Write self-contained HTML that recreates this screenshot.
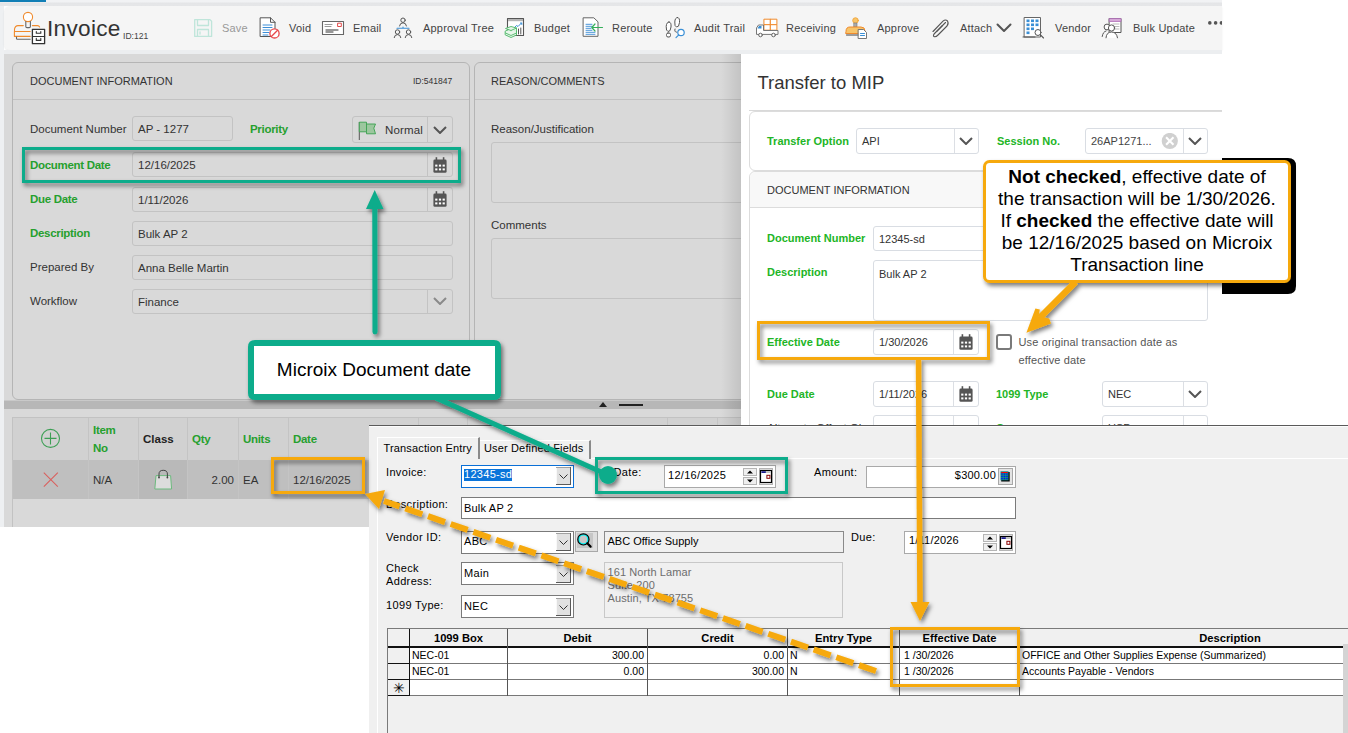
<!DOCTYPE html>
<html><head><meta charset="utf-8">
<style>
*{box-sizing:border-box;margin:0;padding:0}
html,body{width:1348px;height:733px;overflow:hidden;background:#fff;font-family:"Liberation Sans",sans-serif;color:#333}
.a{position:absolute}
.t{position:absolute;white-space:nowrap}
/* top app */
#strip{left:0;top:0;width:1222px;height:6px;background:linear-gradient(#f1f2f4 0,#f1f2f4 2px,#e4e5e7 3px,#e6e7e9 6px)}
#blue{left:0;top:0;width:46px;height:2px;background:#127fb6}
#leftstrip{left:0;top:6px;width:4px;height:521px;background:#eef0f2}
#toolbar{left:4px;top:6px;width:1218px;height:44px;background:#f5f5f5;border-radius:6px 0 0 6px;box-shadow:0 1px 2px rgba(0,0,0,.08)}
#below{left:4px;top:50px;width:1218px;height:4px;background:#eceef0}
#backdrop{left:4px;top:54px;width:737px;height:473px;background:#d9d9d9}
.tb{position:absolute;top:22px;font-size:11px;color:#444;white-space:nowrap;letter-spacing:.2px}
.panel{position:absolute;border:1px solid #b5b5b5;border-radius:6px;background:#d9d9d9}
.phead{position:absolute;left:0;top:0;right:0;height:37px;border-bottom:1px solid #c2c2c2}
.lbl{position:absolute;font-size:11.5px;color:#333;white-space:nowrap}
.glbl{position:absolute;font-size:11.5px;color:#26a02e;font-weight:bold;white-space:nowrap;letter-spacing:-.3px}
.inp{position:absolute;border:1px solid #c3c3c3;border-radius:3px;background:#d9d9d9;font-size:11.5px;color:#333;padding:0 0 0 5px;line-height:25px;white-space:nowrap}
.mg{position:absolute;font-size:11px;color:#22b526;font-weight:bold;white-space:nowrap}
.minp{position:absolute;border:1px solid #d9dde3;border-radius:3px;background:#fff;font-size:11px;color:#333;padding:0 0 0 5px;line-height:24px;white-space:nowrap}
.msep{position:absolute;top:0;bottom:0;width:1px;background:#dcdfe4}
.chev{position:absolute;top:6px;width:10px;height:10px;border-right:2px solid #444;border-bottom:2px solid #444;transform:rotate(45deg) scale(.9)}
.ddb{position:absolute;width:15px;height:18px;border:1px solid #a0a0a0;background:linear-gradient(#f2f2f2,#dedede)}
.gh{position:absolute;top:631.5px;font-size:11.2px;font-weight:bold;color:#000;text-align:center;white-space:nowrap}
.gd{position:absolute;font-size:10.5px;color:#000;white-space:nowrap}
.ml{position:absolute;font-size:11px;color:#000;white-space:nowrap;letter-spacing:.35px}
.sep{position:absolute;top:0;bottom:0;width:1px;background:#c6c6c6}
</style></head><body>

<svg width="0" height="0" style="position:absolute">
 <defs>
  <symbol id="cal" viewBox="0 0 14 16">
   <path d="M1.8 2.6 H12.2 Q13.6 2.6 13.6 4 V14.4 Q13.6 15.8 12.2 15.8 H1.8 Q0.4 15.8 0.4 14.4 V4 Q0.4 2.6 1.8 2.6 Z" fill="currentColor"/>
   <rect x="2.6" y="0.2" width="1.6" height="3" fill="currentColor"/><rect x="9.8" y="0.2" width="1.6" height="3" fill="currentColor"/>
   <rect x="1.6" y="4.4" width="10.8" height="1.4" fill="#fff" opacity="0"/>
   <g fill="#fff"><rect x="2.2" y="7.6" width="2.2" height="2"/><rect x="5.9" y="7.6" width="2.2" height="2"/><rect x="9.6" y="7.6" width="2.2" height="2"/><rect x="2.2" y="11.4" width="2.2" height="2"/><rect x="5.9" y="11.4" width="2.2" height="2"/><rect x="9.6" y="11.4" width="2.2" height="2"/></g>
  </symbol>
  <symbol id="chev" viewBox="0 0 14 8"><path d="M1 1 L7 7 L13 1" fill="none" stroke="currentColor" stroke-width="2"/></symbol>
 </defs>
</svg>
<div id="strip" class="a"></div>
<div id="blue" class="a"></div>
<div id="leftstrip" class="a"></div>
<div id="toolbar" class="a"></div>
<div id="below" class="a"></div>
<div id="backdrop" class="a"></div>


<!-- toolbar icons -->
<svg class="a" style="left:0;top:0" width="1222" height="50" viewBox="0 0 1222 50" fill="none" stroke-linecap="round" stroke-linejoin="round">
 <!-- logo -->
 <g transform="translate(10,8)">
  <circle cx="18" cy="9" r="4.6" stroke="#f08a2c" stroke-width="1.1" fill="#fff"/>
  <path d="M15.8 13.6 V18.4 Q15.8 19.6 17 19.6 H19.2 Q20.4 19.6 20.4 18.4 V13.6" stroke="#666" stroke-width="1.1"/>
  <path d="M13.3 17.6 H8 Q5.2 17.6 4.5 21 V23.5" stroke="#f08a2c" stroke-width="1.1"/>
  <path d="M22.4 17.6 H27.5 Q29 17.6 29.6 19" stroke="#f08a2c" stroke-width="1.1"/>
  <path d="M20.2 23.5 H4.4 V28.4 H20.2" stroke="#f08a2c" stroke-width="1.1"/>
  <path d="M6.5 29 V30.6 Q6.5 31.3 7.3 31.3 H20.2" stroke="#666" stroke-width="1.1"/>
  <rect x="22.4" y="21.3" width="12.2" height="14.4" fill="#fff" stroke="#333" stroke-width="1.3"/>
  <line x1="22.4" y1="28.5" x2="34.6" y2="28.5" stroke="#333" stroke-width="1.2"/>
  <path d="M26.3 23.5 V25.3 H30.8 V23.5 M26.3 30.4 V32.4 H30.8 V30.4" stroke="#333" stroke-width="1.1"/>
 </g>
 <!-- save -->
 <g stroke="#bfe5da" stroke-width="1.3" fill="none">
  <path d="M194.7 19.6 H210 L211.6 21.2 V36.4 H194.7 Z"/>
  <path d="M197.5 19.6 V25.5 H208.5 V19.6"/>
  <path d="M197.5 36.4 V29.5 H208.5 V36.4"/>
  <line x1="200" y1="32" x2="200" y2="34"/>
 </g>
 <!-- void -->
 <path d="M260.5 17.8 H270.5 L275 22.3 V36.5 H260.5 Z" fill="#fff" stroke="#555" stroke-width="1"/>
 <path d="M270.5 17.8 V22.3 H275" stroke="#555" stroke-width="1"/>
 <g stroke="#3c8fd8" stroke-width="1"><line x1="263" y1="25" x2="272" y2="25"/><line x1="263" y1="27.5" x2="272" y2="27.5"/><line x1="263" y1="30" x2="270" y2="30"/><line x1="263" y1="32.5" x2="269" y2="32.5"/><line x1="263" y1="35" x2="268" y2="35"/></g>
 <circle cx="274.5" cy="33.4" r="4.6" fill="#fff" stroke="#e8464a" stroke-width="1.3"/>
 <line x1="271.4" y1="36.5" x2="277.6" y2="30.3" stroke="#e8464a" stroke-width="1.3"/>
 <!-- email -->
 <rect x="322.5" y="21.5" width="21" height="13" fill="#fff" stroke="#666" stroke-width="1.1"/>
 <g stroke="#999" stroke-width="1"><line x1="325" y1="24.5" x2="332" y2="24.5"/><line x1="325" y1="26.5" x2="331" y2="26.5"/></g>
 <g stroke="#777" stroke-width="1.3"><line x1="326" y1="30" x2="338" y2="30"/><line x1="326" y1="32" x2="333" y2="32"/></g>
 <rect x="338" y="23.2" width="3.3" height="3.3" fill="#fff" stroke="#e24a4a" stroke-width="1"/>
 <!-- approval tree -->
 <g stroke="#555" stroke-width="1">
  <circle cx="403" cy="20.2" r="2.2"/><path d="M399.5 26 Q400 22.8 403 22.8 Q406 22.8 406.5 26"/>
  <circle cx="397.5" cy="32" r="2.2"/><path d="M394.2 37.6 Q394.5 34.6 397.5 34.6 Q400.5 34.6 400.8 37.6"/>
  <circle cx="408.5" cy="32" r="2.2"/><path d="M405.2 37.6 Q405.5 34.6 408.5 34.6 Q411.5 34.6 411.8 37.6"/>
 </g>
 <path d="M397 28.3 H409 M403 27 V28.3" stroke="#3a8fd6" stroke-width="1.1"/>
 <!-- budget -->
 <rect x="507.5" y="18.5" width="16" height="17" fill="#fff" stroke="#555" stroke-width="1.1"/>
 <rect x="508" y="19" width="15" height="2.2" fill="#b5b5b5"/>
 <path d="M513.5 28.5 L516.5 25.5 L518 26.5 L521.5 23" stroke="#3a8fd6" stroke-width="1"/>
 <path d="M520.5 23 H521.8 V24.5" stroke="#3a8fd6" stroke-width="1"/>
 <path d="M518.5 29 V34 M520.8 28 V34" stroke="#555" stroke-width="1"/>
 <g stroke="#4cb866" stroke-width=".9" fill="#e8f6ea">
  <path d="M505.5 31 L511 28.5 L516.5 31 V35 L511 37.5 L505.5 35 Z"/>
  <path d="M505.5 33 L511 35.5 L516.5 33"/>
  <path d="M511 30.5 L516.5 28 V31 M511 30.5 L505.5 28.5 L511 26.5 L516.5 28"/>
 </g>
 <!-- reroute -->
 <path d="M583.5 17.8 H593.8 L598 21.8 V36.3 H583.5 Z" fill="#fff" stroke="#666" stroke-width="1"/>
 <g stroke="#4a94d8" stroke-width="1"><line x1="586" y1="24.3" x2="592" y2="24.3"/><line x1="586" y1="26.3" x2="592" y2="26.3"/><line x1="586" y1="28.3" x2="591" y2="28.3"/><line x1="586" y1="30.3" x2="592" y2="30.3"/><line x1="586" y1="32.3" x2="595" y2="32.3"/><line x1="586" y1="34.3" x2="595" y2="34.3"/></g>
 <path d="M602.5 27.5 H592 M595 24 L591.8 27.5 L595 31" stroke="#35b05a" stroke-width="1.2"/>
 <!-- audit trail -->
 <g stroke="#555" stroke-width="1" fill="#fff">
  <path d="M669 22 Q666.5 22 666.2 26.5 Q666 31 668 31.5 Q670.5 32 671 27 Q671.5 22 669 22 Z"/>
  <rect x="666.5" y="33" width="4" height="4" rx="1.5"/>
  <path d="M677.5 17.5 Q675 17.5 674.8 22 Q674.5 26.5 676.5 27 Q679 27.5 679.5 22.5 Q680 17.5 677.5 17.5 Z"/>
  <path d="M675 29 Q674 32 676.5 32.2"/>
 </g>
 <circle cx="681" cy="32.5" r="3.2" stroke="#3a8fd6" stroke-width="1.2" fill="#fff"/>
 <line x1="678.8" y1="34.8" x2="676" y2="37.6" stroke="#3a8fd6" stroke-width="1.2"/>
 <!-- receiving -->
 <g stroke="#f08a2c" stroke-width="1" fill="#fff"><rect x="764.3" y="19.2" width="6.3" height="5.5"/><rect x="770.6" y="19.2" width="6.3" height="5.5"/><rect x="764.3" y="24.7" width="6.3" height="5.5"/><rect x="770.6" y="24.7" width="6.3" height="5.5"/></g>
 <path d="M756.5 34 V28 L758.5 25 H763.5 V30.5 H778 V34 Z" fill="#fff" stroke="#777" stroke-width="1"/>
 <path d="M757.5 28.5 L759 26 H761.5 V28.5 Z" fill="#3a8fd6"/>
 <circle cx="760.5" cy="35" r="1.8" fill="#fff" stroke="#666" stroke-width="1"/><circle cx="773.5" cy="35" r="1.8" fill="#fff" stroke="#666" stroke-width="1"/>
 <!-- approve -->
 <circle cx="855.5" cy="20.5" r="2.8" fill="#f7c46a" stroke="#f0a030" stroke-width=".8"/>
 <rect x="854" y="23" width="3" height="4" fill="#aaa" stroke="#777" stroke-width=".6"/>
 <path d="M846 31 Q846 27 850 27 H861 Q865 27 865 31 V33.5 H846 Z" fill="#f7c46a" stroke="#f08a2c" stroke-width="1"/>
 <line x1="846.5" y1="35" x2="860" y2="35" stroke="#444" stroke-width="1"/>
 <path d="M858.5 29.5 H863.5 L866.5 32.5 V38.5 H858.5 Z" fill="#fff" stroke="#777" stroke-width="1"/>
 <path d="M860.5 33.5 H864.5 M860.5 35.5 H864.5" stroke="#3a8fd6" stroke-width="1"/>
 <!-- attach -->
 <path d="M945.5 22.5 L935 33 Q932.5 35.5 934 36.5 Q935.5 37.5 938 35 L947 26 Q949 23.5 947.5 21 Q945.5 19 943 21.2 L933 31.5" stroke="#555" stroke-width="1.1"/>
 <path d="M942.5 25.5 L936.8 31.3" stroke="#555" stroke-width="1.1"/>
 <path d="M997.5 24.5 L1004 31 L1010.5 24.5" stroke="#555" stroke-width="2"/>
 <!-- vendor -->
 <rect x="1024.5" y="17.5" width="16" height="19.5" fill="#fff" stroke="#666" stroke-width="1"/>
 <g fill="#3a8fd6"><rect x="1026.5" y="19.5" width="3" height="2.6"/><rect x="1031" y="19.5" width="3" height="2.6"/><rect x="1035.5" y="19.5" width="3" height="2.6"/><rect x="1026.5" y="23.5" width="3" height="2.6"/><rect x="1031" y="23.5" width="3" height="2.6"/><rect x="1035.5" y="23.5" width="3" height="2.6"/><rect x="1026.5" y="27.5" width="3" height="2.6"/><rect x="1031" y="27.5" width="3" height="2.6"/><rect x="1026.5" y="31.5" width="3" height="2.6"/></g>
 <circle cx="1038" cy="32.5" r="3" fill="#fff" stroke="#555" stroke-width="1"/>
 <line x1="1040.2" y1="34.7" x2="1043.5" y2="38" stroke="#555" stroke-width="1.1"/>
 <line x1="1023" y1="37" x2="1035" y2="37" stroke="#555" stroke-width="1"/>
 <!-- bulk update -->
 <rect x="1109.5" y="18.5" width="11.5" height="14" fill="#fff" stroke="#555" stroke-width="1"/>
 <rect x="1109.5" y="18.5" width="11.5" height="3" fill="#d6a8d8" stroke="#b070b8" stroke-width=".8"/>
 <g stroke="#bbb" stroke-width="1"><line x1="1113" y1="24" x2="1119" y2="24"/><line x1="1113" y1="26.5" x2="1119" y2="26.5"/><line x1="1113" y1="29" x2="1119" y2="29"/></g>
 <circle cx="1107" cy="27" r="2.9" fill="#fff" stroke="#555" stroke-width="1"/>
 <path d="M1102.2 36.5 Q1103 31.5 1106 31" stroke="#555" stroke-width="1"/>
 <circle cx="1111.5" cy="28" r="3.1" fill="#fff" stroke="#555" stroke-width="1"/>
 <path d="M1106 37.8 Q1106.5 32 1111.5 32 Q1116.5 32 1117.5 37.8" fill="#fff" stroke="#555" stroke-width="1"/>
 <!-- dots -->
 <g fill="#555"><circle cx="1209.8" cy="22.9" r="1.8"/><circle cx="1215.6" cy="22.9" r="1.8"/><circle cx="1221.4" cy="22.9" r="1.8"/></g>
</svg>
<!-- toolbar content -->
<div class="t" style="left:47px;top:16px;font-size:22.6px;color:#333;line-height:26px;letter-spacing:.3px">Invoice</div>
<div class="t" style="left:123px;top:30.5px;font-size:8.6px;color:#444">ID:121</div>
<div class="tb" style="left:222px;color:#999">Save</div>
<div class="tb" style="left:289px">Void</div>
<div class="tb" style="left:353px">Email</div>
<div class="tb" style="left:423px">Approval Tree</div>
<div class="tb" style="left:534px">Budget</div>
<div class="tb" style="left:612px">Reroute</div>
<div class="tb" style="left:694px">Audit Trail</div>
<div class="tb" style="left:786px">Receiving</div>
<div class="tb" style="left:877px">Approve</div>
<div class="tb" style="left:960px">Attach</div>
<div class="tb" style="left:1055px">Vendor</div>
<div class="tb" style="left:1133px">Bulk Update</div>

<!-- document information panel -->
<div class="panel" style="left:12px;top:62px;width:458px;height:338px">
  <div class="phead"></div>
</div>
<div class="t" style="left:30px;top:74.5px;font-size:11px;color:#333">DOCUMENT INFORMATION</div>
<div class="t" style="left:413px;top:76px;font-size:8.5px;color:#333">ID:541847</div>
<div class="lbl" style="left:30px;top:123px">Document Number</div>
<div class="inp" style="left:132px;top:116px;width:101px;height:25px">AP - 1277</div>
<div class="glbl" style="left:250px;top:123px">Priority</div>
<div class="lbl" style="left:30px;top:159px;color:#26a02e;font-weight:bold;letter-spacing:-.3px">Document Date</div>
<div class="inp" style="left:132px;top:152px;width:321px;height:25px">12/16/2025</div>
<div class="glbl" style="left:30px;top:193px">Due Date</div>
<div class="inp" style="left:132px;top:186.5px;width:321px;height:25px;line-height:24.5px">1/11/2026</div>
<div class="glbl" style="left:30px;top:227px">Description</div>
<div class="inp" style="left:132px;top:220.5px;width:321px;height:25px;line-height:24.5px">Bulk AP 2</div>
<div class="lbl" style="left:30px;top:261px">Prepared By</div>
<div class="inp" style="left:132px;top:254.5px;width:321px;height:25px;line-height:24.5px">Anna Belle Martin</div>
<div class="lbl" style="left:30px;top:295px">Workflow</div>
<div class="inp" style="left:132px;top:288.5px;width:321px;height:25px;line-height:24.5px">Finance</div>


<div class="inp" style="left:352px;top:116px;width:101px;height:27px;line-height:25px"></div>
<div class="a" style="left:427px;top:117px;width:1px;height:25px;background:#c3c3c3"></div>
<svg class="a" style="left:358px;top:121px" width="19" height="20" viewBox="0 0 19 20"><path d="M1.3 1 V19" stroke="#555" stroke-width="1"/><path d="M1.3 1.2 H8.5 V3 H17.5 L15.8 7.2 L17.5 12.8 H8.5 V10.8 H1.3 Z" fill="#9cc79e" stroke="#3aa04e" stroke-width="0.9"/><path d="M8.5 3 V10.8" stroke="#3aa04e" stroke-width="0.9"/></svg>
<div class="t" style="left:385px;top:124px;font-size:11.5px;color:#333;letter-spacing:.15px">Normal</div>
<svg class="a" style="left:433px;top:126px;color:#555" width="14" height="8"><use href="#chev"/></svg>
<div class="a" style="left:427px;top:153px;width:1px;height:24px;background:#c3c3c3"></div>
<svg class="a" style="left:433px;top:157px;color:#555" width="14" height="16"><use href="#cal"/></svg>
<div class="a" style="left:427px;top:188px;width:1px;height:23px;background:#c3c3c3"></div>
<svg class="a" style="left:433px;top:191px;color:#555" width="14" height="16"><use href="#cal"/></svg>
<div class="a" style="left:427px;top:290px;width:1px;height:23px;background:#c3c3c3"></div>
<svg class="a" style="left:433px;top:297px;color:#8a8a8a" width="14" height="8"><use href="#chev"/></svg>

<!-- reason panel -->
<div class="panel" style="left:474px;top:62px;width:300px;height:338px">
  <div class="phead"></div>
</div>


<!-- reason panel content -->
<div class="t" style="left:491px;top:74.5px;font-size:11px;color:#333">REASON/COMMENTS</div>
<div class="lbl" style="left:491px;top:123px">Reason/Justification</div>
<div class="inp" style="left:491px;top:142px;width:280px;height:61px"></div>
<div class="lbl" style="left:491px;top:219px">Comments</div>
<div class="inp" style="left:491px;top:238px;width:280px;height:61px"></div>

<!-- splitter -->
<div class="a" style="left:4px;top:400px;width:737px;height:1px;background:#c9c9c9"></div>
<div class="a" style="left:4px;top:401px;width:737px;height:8px;background:#b7b7b7"></div>
<div class="a" style="left:599px;top:402px;width:0;height:0;border-left:4px solid transparent;border-right:4px solid transparent;border-bottom:5px solid #222"></div>
<div class="a" style="left:619px;top:404px;width:24px;height:2px;background:#222"></div>

<!-- lines grid -->
<div class="a" style="left:12px;top:417px;width:729px;height:110px;border-left:1px solid #c2c2c2;border-top:1px solid #c2c2c2;background:#d9d9d9"></div>
<div class="a" style="left:13px;top:418px;width:728px;height:42px;background:#d1d1d1"></div>
<div class="a" style="left:13px;top:460px;width:728px;height:39px;background:#bfbfbf"></div>
<div class="a" style="left:88px;top:418px;width:1px;height:81px;background:#c4c4c4"></div>
<div class="a" style="left:138px;top:418px;width:1px;height:81px;background:#c4c4c4"></div>
<div class="a" style="left:187px;top:418px;width:1px;height:81px;background:#c4c4c4"></div>
<div class="a" style="left:238px;top:418px;width:1px;height:81px;background:#c4c4c4"></div>
<div class="a" style="left:288px;top:418px;width:1px;height:81px;background:#c4c4c4"></div>
<div class="a" style="left:418px;top:418px;width:1px;height:81px;background:#c4c4c4"></div>
<div class="a" style="left:467px;top:418px;width:1px;height:81px;background:#c4c4c4"></div>
<div class="a" style="left:667px;top:418px;width:1px;height:81px;background:#c4c4c4"></div>
<div class="a" style="left:717px;top:418px;width:1px;height:81px;background:#c4c4c4"></div>
<div class="a" style="left:139px;top:460px;width:48px;height:39px;background:#b9b9b9"></div>
<svg class="a" style="left:0;top:410px" width="200" height="90" viewBox="0 410 200 90">
 <circle cx="50.5" cy="438.4" r="9" fill="none" stroke="#3d9f55" stroke-width="1.1"/>
 <path d="M44.5 438.4 H56.5 M50.5 432.4 V444.4" stroke="#3d9f55" stroke-width="1.1"/>
 <path d="M43.8 472.6 L57.8 486.6 M57.8 472.6 L43.8 486.6" stroke="#d9605e" stroke-width="1.1"/>
 <path d="M156 475.6 H170.6 L171.6 489 H154.8 Z" fill="#dcdcdc" stroke="#6dba7e" stroke-width="1"/>
 <path d="M159 477.5 V474 Q159 470.3 163.2 470.3 Q167.4 470.3 167.4 474 V477.5" fill="none" stroke="#444" stroke-width="1"/>
 <circle cx="159" cy="477.5" r="0.9" fill="#444"/><circle cx="167.4" cy="477.5" r="0.9" fill="#444"/>
</svg>
<div class="glbl" style="left:93px;top:422.3px;line-height:17.4px">Item<br>No</div>
<div class="lbl" style="left:143px;top:433px;font-weight:bold;color:#222">Class</div>
<div class="glbl" style="left:192px;top:433px">Qty</div>
<div class="glbl" style="left:243px;top:433px">Units</div>
<div class="glbl" style="left:293px;top:433px">Date</div>
<div class="lbl" style="left:93px;top:474px">N/A</div>
<div class="lbl" style="left:199px;top:474px;width:35px;text-align:right">2.00</div>
<div class="lbl" style="left:243px;top:474px">EA</div>
<div class="lbl" style="left:293px;top:474px">12/16/2025</div>

<!-- transfer modal -->
<div class="a" style="left:721px;top:54px;width:20px;height:373px;background:linear-gradient(to right,rgba(0,0,0,0),rgba(0,0,0,.10))"></div>
<div class="a" id="modal" style="left:741px;top:54px;width:481px;height:371px;background:#fff;overflow:hidden">
 <div class="t" style="left:16.5px;top:18px;font-size:18.5px;color:#333">Transfer to MIP</div>
 <div class="a" style="left:8px;top:56px;width:480px;height:1px;background:#d9d9d9"></div>
 <div class="a" style="left:8px;top:57px;width:490px;height:60px;border:1px solid #dcdcdc;border-radius:6px;background:#fff"></div>
 <div class="mg" style="left:26px;top:81px">Transfer Option</div>
 <div class="minp" style="left:115px;top:74px;width:123px;height:26px">API<div class="msep" style="left:97px"></div></div>
 <svg class="a" style="left:218px;top:83px;color:#555" width="14" height="8"><use href="#chev"/></svg>
 <div class="mg" style="left:256px;top:81px">Session No.</div>
 <div class="minp" style="left:344px;top:74px;width:123px;height:26px;color:#444">26AP1271...<div class="msep" style="left:97px"></div></div>
 <svg class="a" style="left:420px;top:78.8px" width="18" height="18" viewBox="0 0 18 18"><circle cx="8.8" cy="8" r="8.1" fill="#d0d0d0"/><path d="M5.1 4.3 L12.5 11.7 M12.5 4.3 L5.1 11.7" stroke="#fff" stroke-width="2.1"/></svg>
 <svg class="a" style="left:447px;top:83px;color:#555" width="14" height="8"><use href="#chev"/></svg>
 <div class="a" style="left:8px;top:117px;width:490px;height:300px;border:1px solid #dcdcdc;border-radius:6px;background:#fff"></div>
 <div class="a" style="left:9px;top:118px;width:480px;height:36px;background:#f8f8f8;border-bottom:1px solid #dcdcdc;border-radius:6px 0 0 0"></div>
 <div class="t" style="left:26px;top:129.5px;font-size:11px;color:#333">DOCUMENT INFORMATION</div>
 <div class="mg" style="left:26px;top:178px">Document Number</div>
 <div class="minp" style="left:132px;top:171.5px;width:335px;height:25px">12345-sd</div>
 <div class="mg" style="left:26px;top:212px">Description</div>
 <div class="minp" style="left:132px;top:205.5px;width:335px;height:61px;line-height:14px;padding-top:6px">Bulk AP 2</div>
 <div class="mg" style="left:26px;top:282px">Effective Date</div>
 <div class="minp" style="left:132px;top:275px;width:106px;height:25.5px">1/30/2026<div class="msep" style="left:79px"></div></div>
 <svg class="a" style="left:218px;top:280px;color:#555" width="14" height="16"><use href="#cal"/></svg>
 <div class="a" style="left:255px;top:280px;width:15.5px;height:15.5px;border:2px solid #7a7a7a;border-radius:3px;background:#fff"></div>
 <div class="t" style="left:277.5px;top:280px;font-size:11px;color:#555;line-height:17.5px;letter-spacing:.15px">Use original transaction date as<br>effective date</div>
 <div class="mg" style="left:26px;top:334px">Due Date</div>
 <div class="minp" style="left:132px;top:327px;width:106px;height:25.5px">1/11/2026<div class="msep" style="left:79px"></div></div>
 <svg class="a" style="left:218px;top:332px;color:#555" width="14" height="16"><use href="#cal"/></svg>
 <div class="mg" style="left:255px;top:334px">1099 Type</div>
 <div class="minp" style="left:361px;top:327px;width:106px;height:25.5px">NEC<div class="msep" style="left:80px"></div></div>
 <svg class="a" style="left:447px;top:336px;color:#555" width="14" height="8"><use href="#chev"/></svg>
 <div class="t" style="left:26px;top:368px;font-size:11.5px;color:#333">Alternate Offset Gl</div>
 <div class="minp" style="left:132px;top:361px;width:106px;height:25px"><div class="msep" style="left:79px"></div></div>
 <div class="mg" style="left:255px;top:368px">Currency</div>
 <div class="minp" style="left:361px;top:361px;width:106px;height:25px">USD<div class="msep" style="left:80px"></div></div>
</div>

<!-- microix window -->
<svg width="0" height="0" style="position:absolute">
 <defs>
  <symbol id="ddb" viewBox="0 0 15 18">
   <rect x="0" y="0" width="15" height="18" fill="#e1e1e1"/>
   <path d="M0.5 17.5 V0.5 H14.5" fill="none" stroke="#f8f8f8" stroke-width="1"/>
   <path d="M0 0.5 H14.5 V17.5 H0" fill="none" stroke="#a0a0a0" stroke-width="1"/>
   <path d="M14.5 0 V18 M0 17.5 H15" fill="none" stroke="#5a5a5a" stroke-width="1"/>
   <path d="M3.5 7.5 L7.5 11.5 L11.5 7.5" fill="none" stroke="#333" stroke-width="1"/>
  </symbol>
  <symbol id="spin" viewBox="0 0 14 17">
   <rect x="0.5" y="0.5" width="13" height="7" fill="#efefef" stroke="#b5b5b5"/>
   <rect x="0.5" y="9.5" width="13" height="7" fill="#efefef" stroke="#b5b5b5"/>
   <path d="M4 5.5 L7 2.5 L10 5.5 Z M4 11.5 L7 14.5 L10 11.5 Z" fill="#000"/>
  </symbol>
  <symbol id="calb" viewBox="0 0 14 17">
   <rect x="0.5" y="0.5" width="13" height="16" fill="#efefef" stroke="#b5b5b5"/>
   <rect x="1.5" y="2.5" width="11" height="12" fill="#fff" stroke="#000" stroke-width="1.2"/>
   <rect x="2.4" y="3.3" width="4.5" height="1.6" fill="#000080"/>
   <rect x="6.9" y="3.3" width="4.6" height="1.6" fill="#b8b8b8"/>
   <rect x="7.9" y="7.3" width="3" height="3" fill="none" stroke="#8b0000" stroke-width="1"/>
  </symbol>
 </defs>
</svg>
<div class="a" id="mx" style="left:369px;top:425px;width:979px;height:308px;background:#f0f0f0;overflow:hidden;font-size:11px;color:#000">
 <div class="a" style="left:0;top:0;width:979px;height:1px;background:#5a5a5a"></div>
 <div class="a" style="left:0;top:1px;width:979px;height:1px;background:#fcfcfc"></div>
 <!-- tab panel -->
 <div class="a" style="left:8px;top:33px;width:980px;height:290px;border-left:1px solid #fff;border-top:1px solid #fff"></div>
 <div class="a" style="left:110px;top:14.5px;width:112px;height:19px;border-top:1px solid #fff;border-left:1px solid #fff;border-right:2px solid #8a8a8a;background:#f0f0f0"></div>
 <div class="a" style="left:8px;top:12px;width:103px;height:22px;border-left:1px solid #fff;border-top:1px solid #fff;border-right:2px solid #8a8a8a;background:#f0f0f0"></div>
 <div class="ml" style="left:14.5px;top:17px;letter-spacing:.15px">Transaction Entry</div>
 <div class="ml" style="left:115px;top:17px;letter-spacing:.15px">User Defined Fields</div>
 <!-- invoice -->
 <div class="ml" style="left:17px;top:41px">Invoice:</div>
 <div class="a" style="left:92px;top:40px;width:113px;height:23px;border:1px solid #0a6fd6;background:#fff"></div>
 <div class="a" style="left:94.8px;top:43.6px;width:48px;height:12px;background:#0a74da"></div>
 <div class="ml" style="left:95px;top:43px;color:#fff;letter-spacing:.3px">12345-sd</div>
 <svg class="a" style="left:187px;top:42px" width="15" height="18"><use href="#ddb"/></svg>
 <!-- date -->
 <div class="ml" style="left:244.5px;top:41px">Date:</div>
 <div class="a" style="left:295px;top:40.3px;width:112px;height:23px;border:1px solid #a9a9a9;background:#fff"></div>
 <div class="ml" style="left:299px;top:44px;letter-spacing:.3px">12/16/2025</div>
 <svg class="a" style="left:374px;top:43px" width="14" height="17"><use href="#spin"/></svg>
 <svg class="a" style="left:390px;top:43px" width="14" height="17"><use href="#calb"/></svg>
 <!-- amount -->
 <div class="ml" style="left:445px;top:41px">Amount:</div>
 <div class="a" style="left:497px;top:40.5px;width:150px;height:22px;border:1px solid #a9a9a9;background:#fff"></div>
 <div class="ml" style="left:560px;top:44px;width:67px;text-align:right;letter-spacing:.2px">$300.00</div>
 <svg class="a" style="left:629px;top:43px" width="15" height="17" viewBox="0 0 15 17"><rect x="0.5" y="0.5" width="14" height="16" fill="#e3e3e3" stroke="#a8a8a8"/><rect x="3.2" y="4" width="8.5" height="9.5" fill="#000"/><rect x="2.5" y="3.3" width="8" height="9" fill="#0e8a8a"/><rect x="3.2" y="4" width="6.6" height="1" fill="#f00"/><g fill="#00f"><rect x="3.3" y="5.5" width="1.3" height="1.2"/><rect x="5.8" y="5.5" width="1.3" height="1.2"/><rect x="8.3" y="5.5" width="1.3" height="1.2"/><rect x="3.3" y="7.8" width="1.3" height="1.2"/><rect x="5.8" y="7.8" width="1.3" height="1.2"/><rect x="8.3" y="7.8" width="1.3" height="1.2"/><rect x="3.3" y="10" width="1.3" height="1.2"/><rect x="5.8" y="10" width="1.3" height="1.2"/><rect x="8.3" y="10" width="1.3" height="1.2"/></g></svg>
 <!-- description -->
 <div class="ml" style="left:17px;top:73px">Description:</div>
 <div class="a" style="left:92px;top:72.3px;width:555px;height:22px;border:1px solid #7a7a7a;background:#fff"></div>
 <div class="ml" style="left:95px;top:77px;letter-spacing:.2px">Bulk AP 2</div>
 <!-- vendor -->
 <div class="ml" style="left:17px;top:106px">Vendor ID:</div>
 <div class="a" style="left:92px;top:105.5px;width:113px;height:23px;border:1px solid #7a7a7a;background:#fff"></div>
 <div class="ml" style="left:95px;top:110px">ABC</div>
 <svg class="a" style="left:187px;top:108px" width="15" height="18"><use href="#ddb"/></svg>
 <svg class="a" style="left:206px;top:106px" width="23" height="21" viewBox="0 0 23 21"><rect x="0.5" y="0.5" width="22" height="20" fill="#dedede" stroke="#a8a8a8"/><rect x="2" y="2" width="16" height="15" fill="#c6c6c6"/><circle cx="8.4" cy="8.4" r="4.6" fill="#c8c8c8" stroke="#00f0f0" stroke-width="1.6"/><circle cx="8.4" cy="8.4" r="5.6" fill="none" stroke="#000" stroke-width="1.2"/><path d="M12.3 12.3 L15.6 15.6" stroke="#000" stroke-width="2.2" stroke-linecap="round"/></svg>
 <div class="a" style="left:235.3px;top:105.5px;width:240px;height:22.5px;border:1px solid #8a8a8a;background:#f0f0f0"></div>
 <div class="ml" style="left:238.5px;top:110px;letter-spacing:0">ABC Office Supply</div>
 <div class="ml" style="left:482px;top:106px">Due:</div>
 <div class="a" style="left:535.3px;top:105.5px;width:112px;height:23px;border:1px solid #a9a9a9;background:#fff"></div>
 <div class="ml" style="left:540px;top:109px;letter-spacing:.2px">1/11/2026</div>
 <svg class="a" style="left:614px;top:108.5px" width="14" height="17"><use href="#spin"/></svg>
 <svg class="a" style="left:630px;top:108.5px" width="14" height="17"><use href="#calb"/></svg>
 <!-- check address -->
 <div class="ml" style="left:17px;top:136.5px;line-height:13px">Check<br>Address:</div>
 <div class="a" style="left:92px;top:137px;width:113px;height:23px;border:1px solid #7a7a7a;background:#fff"></div>
 <div class="ml" style="left:95px;top:141.5px">Main</div>
 <svg class="a" style="left:187px;top:139.5px" width="15" height="18"><use href="#ddb"/></svg>
 <div class="a" style="left:235.3px;top:137.4px;width:239px;height:55.5px;border:1px solid #c8c8c8;background:#f0f0f0"></div>
 <div class="ml" style="left:238.5px;top:140.5px;color:#6d6d6d;line-height:13px;letter-spacing:.1px">161 North Lamar<br>Suite 200<br>Austin, TX 78755</div>
 <!-- 1099 -->
 <div class="ml" style="left:17px;top:174px">1099 Type:</div>
 <div class="a" style="left:92px;top:170.4px;width:113px;height:22.5px;border:1px solid #7a7a7a;background:#fff"></div>
 <div class="ml" style="left:95px;top:175px">NEC</div>
 <svg class="a" style="left:187px;top:173px" width="15" height="18"><use href="#ddb"/></svg>
</div>

<!-- microix grid (page coords) -->
<div class="a" style="left:387px;top:628px;width:956px;height:105px;background:#f0f0f0;border-left:1px solid #7a7a7a;border-top:1px solid #7a7a7a"></div>
<div class="a" style="left:1343px;top:644px;width:5px;height:89px;background:#d4d4d4"></div>
<div class="a" style="left:1343px;top:628px;width:5px;height:1px;background:#7a7a7a"></div>
<div class="a" style="left:410px;top:648px;width:933px;height:47px;background:#fff"></div>
<div class="a" style="left:388px;top:646px;width:955px;height:2px;background:#111"></div>
<div class="a" style="left:388px;top:663px;width:955px;height:1px;background:#777"></div>
<div class="a" style="left:388px;top:679px;width:955px;height:1px;background:#777"></div>
<div class="a" style="left:388px;top:695px;width:955px;height:1px;background:#777"></div>
<div class="a" style="left:388px;top:663px;width:22px;height:1px;background:#111"></div>
<div class="a" style="left:388px;top:679px;width:22px;height:1px;background:#111"></div>
<div class="a" style="left:388px;top:695px;width:22px;height:1px;background:#111"></div>
<div class="a" style="left:409px;top:629px;width:1px;height:67px;background:#111"></div>
<div class="a" style="left:507px;top:629px;width:1px;height:67px;background:#555"></div>
<div class="a" style="left:647px;top:629px;width:1px;height:67px;background:#555"></div>
<div class="a" style="left:787px;top:629px;width:1px;height:67px;background:#555"></div>
<div class="a" style="left:899px;top:629px;width:1px;height:67px;background:#555"></div>
<div class="a" style="left:1019px;top:629px;width:1px;height:67px;background:#555"></div>
<div class="gh" style="left:410px;width:97px">1099 Box</div>
<div class="gh" style="left:508px;width:139px">Debit</div>
<div class="gh" style="left:648px;width:139px">Credit</div>
<div class="gh" style="left:788px;width:111px">Entry Type</div>
<div class="gh" style="left:900px;width:119px">Effective Date</div>
<div class="gh" style="left:1020px;width:420px">Description</div>
<div class="gd" style="left:412px;top:649px">NEC-01</div>
<div class="gd" style="left:412px;top:665px">NEC-01</div>
<div class="gd" style="left:560px;top:649px;width:84px;text-align:right">300.00</div>
<div class="gd" style="left:560px;top:665px;width:84px;text-align:right">0.00</div>
<div class="gd" style="left:700px;top:649px;width:84px;text-align:right">0.00</div>
<div class="gd" style="left:700px;top:665px;width:84px;text-align:right">300.00</div>
<div class="gd" style="left:790px;top:649px">N</div>
<div class="gd" style="left:790px;top:665px">N</div>
<div class="gd" style="left:904px;top:649px">1 /30/2026</div>
<div class="gd" style="left:904px;top:665px">1 /30/2026</div>
<div class="gd" style="left:1022px;top:649px">OFFICE and Other Supplies Expense (Summarized)</div>
<div class="gd" style="left:1022px;top:665px">Accounts Payable - Vendors</div>
<div class="gd" style="left:393px;top:680px;font-size:14px">&#x2733;</div>


<!-- annotations -->
<svg class="a" style="left:0;top:0" width="1348" height="733" viewBox="0 0 1348 733">
 <defs>
  <filter id="sh" x="-20%" y="-20%" width="140%" height="140%">
   <feDropShadow dx="2" dy="3" stdDeviation="2.2" flood-color="#000" flood-opacity="0.5"/>
  </filter>
 </defs>
 <!-- black shadow block beyond page -->
 <path d="M1222 158 H1288 Q1296 158 1296 166 V286 Q1296 294 1288 294 H1222 Z" fill="#000"/>
 <g filter="url(#sh)">
  <!-- teal rect document date -->
  <rect x="23.5" y="148.5" width="436" height="33" fill="none" stroke="#0aac8b" stroke-width="3"/>
  <!-- teal up arrow -->
  <path d="M374.7 190 L383.5 209 L366 209 Z" fill="#0aac8b"/>
  <line x1="374.8" y1="206" x2="375" y2="332" stroke="#0aac8b" stroke-width="5" stroke-linecap="round"/>
  <!-- teal connector to microix date -->
  <line x1="436" y1="398" x2="608" y2="475" stroke="#0aac8b" stroke-width="5"/>
  <circle cx="608" cy="475" r="9" fill="#0aac8b"/>
  <!-- teal callout -->
  <path d="M255 340 H494 Q501 340 501 347 V393 Q501 400 494 400 H255 Q248 400 248 393 V347 Q248 340 255 340 Z M254 346 V394 H495 V346 Z" fill="#0aac8b" fill-rule="evenodd"/><rect x="254" y="346" width="241" height="48" fill="#fff"/>
  <!-- teal rect microix date -->
  <rect x="596.5" y="458.5" width="190" height="34" fill="none" stroke="#0aac8b" stroke-width="3"/>
  <!-- orange rect grid date -->
  <rect x="272.5" y="458.5" width="91" height="34" fill="none" stroke="#f6a90a" stroke-width="3"/>
  <!-- orange dashed arrow -->
  <line x1="876" y1="671" x2="384" y2="501" stroke="#f6a90a" stroke-width="6" stroke-dasharray="18 6"/>
  <path d="M365 494 L385 490 L379 509 Z" fill="#f6a90a"/>
  <!-- orange rect effective date (modal) -->
  <rect x="758.5" y="322.5" width="230" height="36" fill="none" stroke="#f6a90a" stroke-width="3"/>
  <!-- orange vertical arrow -->
  <line x1="918.5" y1="359" x2="920" y2="606" stroke="#f6a90a" stroke-width="5.5"/>
  <path d="M910.5 602 L929.5 602 L920 621 Z" fill="#f6a90a"/>
  <!-- orange rect effective date column -->
  <rect x="891.5" y="628.5" width="127" height="57" fill="none" stroke="#f6a90a" stroke-width="3"/>
  <!-- orange callout + arrow -->
  <line x1="1075.5" y1="282" x2="1040" y2="317.5" stroke="#f6a90a" stroke-width="6.5"/>
  <path d="M1026.4 332.8 L1035.4 308.4 L1039.8 309.6 L1038.6 316.2 L1049.2 318.6 L1051 323.4 Z" fill="#f6a90a"/>
  <rect x="984.5" y="161.5" width="305" height="120" rx="5" ry="5" fill="#fff" stroke="#f6a90a" stroke-width="3"/>
 </g>
</svg>
<div class="t" style="left:248px;top:358.7px;width:252px;text-align:center;font-size:19px;line-height:22px;color:#000">Microix Document date</div>
<div class="a" style="left:983px;top:166px;width:308px;text-align:center;font-size:19px;line-height:21.9px;color:#000"><b>Not checked</b>, effective date of<br>the transaction will be 1/30/2026.<br>If <b>checked</b> the effective date will<br>be 12/16/2025 based on Microix<br>Transaction line</div>

</body></html>
